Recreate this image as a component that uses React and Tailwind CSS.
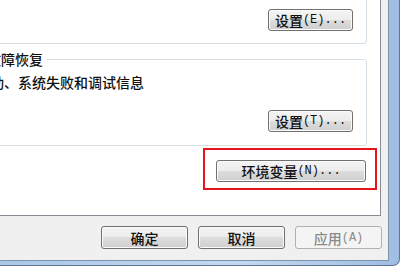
import React from 'react';

function Label({ zh, en }) {
  return (
    <span className="flex items-center leading-none">
      <span className="text-[14px] font-medium">{zh}</span>
      {en && <span className="font-['Liberation_Mono',monospace] text-[12px]">{en}</span>}
    </span>
  );
}

function Button({ className = '', disabled, children }) {
  return (
    <button
      className={`flex items-center justify-center rounded-[3px] border ${
        disabled
          ? 'border-[#adb2b5] bg-[#f4f4f4] text-[#8a8a8a]'
          : 'border-[#707070] bg-[linear-gradient(to_bottom,#f4f4f4,#ececec_50%,#dddddd_50%,#cfcfcf)] text-[#111] shadow-[inset_0_0_0_1px_#fbfbfb]'
      } ${className}`}
    >
      {children}
    </button>
  );
}

export default function App() {
  return (
    <div className="w-[400px] h-[266px] overflow-hidden bg-white font-['Noto_Sans_CJK_SC',sans-serif] text-[#111]">
      <div className="w-[400px] h-[266px] rounded-br-[7px] border-r border-b border-[#5f7591] bg-[linear-gradient(to_right,#aac7e8,#c4d9f0_60%,#9fbde2)] overflow-hidden">
        {/* dialog client area */}
        <div className="w-[389px] h-[261px] bg-[#f0f0f0] border-r border-b border-[#7d92ab] flex flex-col overflow-hidden">
          {/* tab page */}
          <div className="ml-[-80px] mt-[-20px] w-[461px] shrink-0 bg-white border border-[#898c95] pt-[9px] pb-[33px] flex flex-col">
            {/* group 1 (top cut off) */}
            <div className="mx-[13px] h-[54px] border border-[#d5dfe5] rounded-[3px] flex items-end justify-end pr-[13px] pb-[12px]">
              <Button className="w-[85px] h-[22px]">
                <Label zh="设置" en="(E)..." />
              </Button>
            </div>

            {/* startup and recovery */}
            <div className="relative mx-[13px] mt-[15px] h-[87px] border border-[#d5dfe5] rounded-[3px] flex flex-col pt-[12px] px-[13px] pb-[13px]">
              <span className="absolute left-[8px] top-[-9px] bg-white pl-[2px] pr-[4px] text-[14px] font-medium leading-[16px]">
                启动和故障恢复
              </span>
              <p className="text-[14px] font-medium leading-[20px]">系统启动、系统失败和调试信息</p>
              <div className="mt-auto flex justify-end">
                <Button className="w-[85px] h-[22px]">
                  <Label zh="设置" en="(T)..." />
                </Button>
              </div>
            </div>

            {/* environment variables */}
            <div className="mt-[14px] flex justify-end pr-[14px]">
              <div className="relative">
                <Button className="w-[150px] h-[22px]">
                  <Label zh="环境变量" en="(N)..." />
                </Button>
                <div className="absolute left-[-13px] top-[-12px] w-[174px] h-[42px] border-2 border-[#e8141c] pointer-events-none" />
              </div>
            </div>
          </div>

          {/* dialog buttons */}
          <div className="mt-[10px] flex justify-end gap-[10px] pr-[6px]">
            <Button className="w-[87px] h-[23px]">
              <Label zh="确定" />
            </Button>
            <Button className="w-[87px] h-[23px]">
              <Label zh="取消" />
            </Button>
            <Button className="w-[87px] h-[23px]" disabled>
              <Label zh="应用" en="(A)" />
            </Button>
          </div>
        </div>
      </div>
    </div>
  );
}
